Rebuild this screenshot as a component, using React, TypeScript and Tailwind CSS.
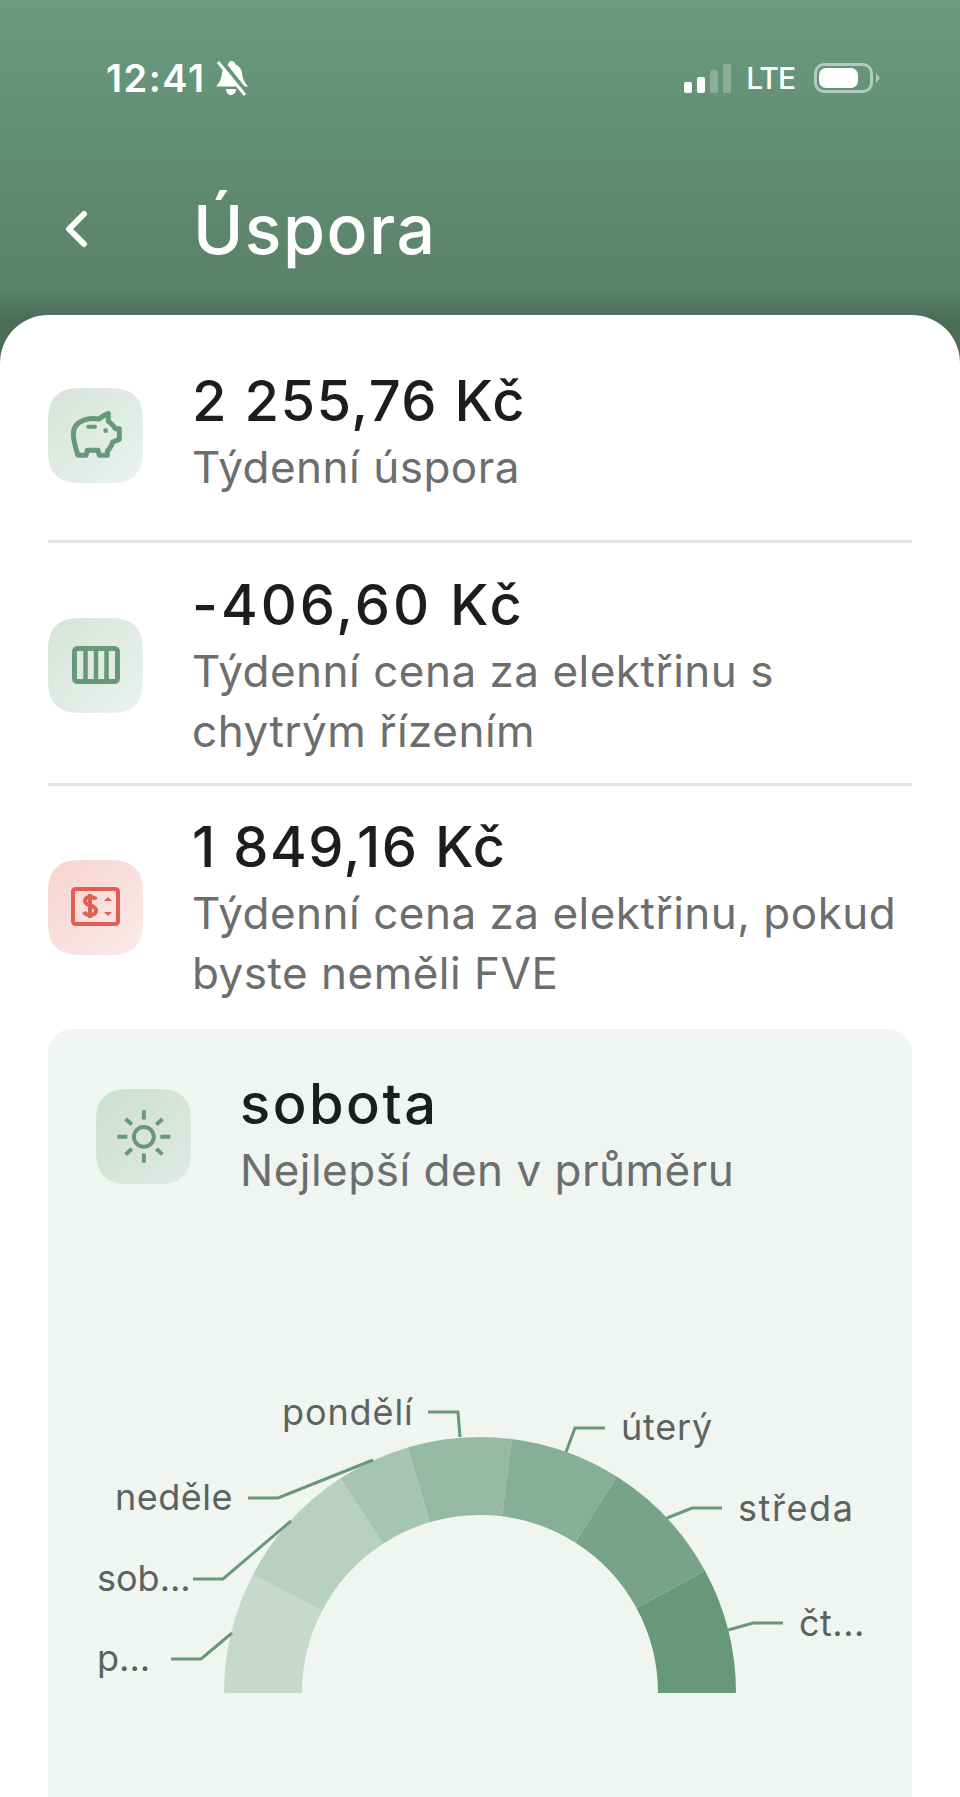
import React from 'react';

const polar = (r: number, deg: number) => {
  const a = (deg * Math.PI) / 180;
  return [480 - r * Math.cos(a), 1693 - r * Math.sin(a)];
};

const arcPath = (from: number, to: number) => {
  const [x1, y1] = polar(256, from);
  const [x2, y2] = polar(256, to);
  const [x3, y3] = polar(178, to);
  const [x4, y4] = polar(178, from);
  return `M${x1} ${y1}A256 256 0 0 1 ${x2} ${y2}L${x3} ${y3}A178 178 0 0 0 ${x4} ${y4}Z`;
};

const segments = [
  { from: 0, to: 27.5, className: 'fill-[#c5d9ce]' },
  { from: 27.5, to: 57, className: 'fill-[#b7d0c2]' },
  { from: 57, to: 73.6, className: 'fill-[#a6c4b3]' },
  { from: 73.6, to: 97.1, className: 'fill-[#95b9a5]' },
  { from: 97.1, to: 122.3, className: 'fill-[#86ae99]' },
  { from: 122.3, to: 151.5, className: 'fill-[#78a38a]' },
  { from: 151.5, to: 180, className: 'fill-[#679879]' },
];

const labels = [
  { text: 'pondělí', x: 282, y: 1425, line: '428,1412 458,1412 460,1437', className: 'tracking-[0.9px]' },
  { text: 'neděle', x: 115, y: 1510, line: '248,1498 278,1498 373,1460', className: 'tracking-[0.5px]' },
  { text: 'sob...', x: 97, y: 1591, line: '193,1579 223,1579 291,1521', className: 'tracking-[0px]' },
  { text: 'p...', x: 97, y: 1671, line: '171,1659 201,1659 232,1633', className: 'tracking-[0px]' },
  { text: 'úterý', x: 621, y: 1440, line: '605,1428 575,1428 566,1452', className: 'tracking-[0.8px]' },
  { text: 'středa', x: 738, y: 1521, line: '722,1508 692,1508 667,1518', className: 'tracking-[1.6px]' },
  { text: 'čt...', x: 799, y: 1636, line: '783,1623 753,1623 728,1630', className: 'tracking-[0.5px]' },
];

const PiggyIcon = () => (
  <svg width="52" height="50" viewBox="120 120 156 150" fill="none" stroke="#679879" strokeWidth="15" strokeLinecap="round" strokeLinejoin="round">
    <path d="M148 157C165 146 190 143 207 147C215 140 225 134 235 130L235 154C246 162 252 168 256 176L268 176L268 208L248 216C244 228 238 238 232 243L232 256L208 256L204 241L172 241L168 256L144 256C138 236 130 215 130 192C130 176 138 164 148 157Z" />
    <path d="M175 170L195 170" strokeWidth="12" />
    <circle cx="227" cy="182" r="7" fill="#679879" stroke="none" />
  </svg>
);

const MeterIcon = () => (
  <svg width="48" height="38" viewBox="0 0 48 38" fill="none" stroke="#679879">
    <rect x="2.500" y="2.500" width="43" height="33" rx="3" strokeWidth="5" />
    <path d="M13.500 2V36M24 2V36M34.500 2V36" strokeWidth="4.500" />
  </svg>
);

const CashIcon = () => (
  <svg width="50" height="40" viewBox="0 0 50 40" fill="none" stroke="#df5f52">
    <rect x="2" y="2" width="45" height="35" rx="2.500" strokeWidth="4" />
    <path d="M25 12.500C24 10.500 22 10 19 10C16 10 14 11.500 14 14C14 19.500 25 17.500 25 23.500C25 26.500 22.500 28 19 28C16 28 14 27 13 25M19 7V31" strokeWidth="4" />
    <path d="M33 14L37 10L41 14ZM33 25L37 29L41 25Z" fill="#df5f52" stroke="none" />
  </svg>
);

const SunIcon = () => (
  <svg width="58" height="58" viewBox="255 835 175 175" fill="none" stroke="#679879" strokeWidth="12">
    <circle cx="342" cy="922" r="30" />
    <path d="M342 842V870M342 972V1000M262 922H292M392 922H422M287 868L306 885M398 868L380 885M287 975L306 958M398 975L380 958" />
  </svg>
);

const BellOffIcon = () => (
  <svg width="34" height="35" viewBox="0 0 34 35" fill="white">
    <path d="M16 0C18.500 0 20 1.500 20.500 3.500C24.500 5 26.500 8.500 27 12C27.500 17 29 21 33 25.500L1 25.500C5 21 6.500 17 7 12C7.500 8.500 9.500 5 13 3.500C13.500 1.500 14.500 0 16 0Z" />
    <path d="M11 28H21C21 31.500 19 34 16 34C13 34 11 31.500 11 28Z" />
    <path d="M6 -1L33 33" stroke="#659679" strokeWidth="4" />
    <path d="M3 1L30 34" stroke="white" strokeWidth="3" />
  </svg>
);

const StatusBar = () => (
  <div className="flex h-[36px] items-center justify-between pl-[106px] pr-[80px]">
    <div className="flex items-center gap-[9px]">
      <span className="text-[38px] leading-none font-semibold tracking-[1.5px] text-white">12:41</span>
      <BellOffIcon />
    </div>
    <div className="flex items-center">
      <div className="flex h-[30px] items-end gap-[5px]">
        <div className="h-[11px] w-[8px] rounded-[2px] bg-white" />
        <div className="h-[16px] w-[8px] rounded-[2px] bg-white" />
        <div className="h-[23px] w-[8px] rounded-[2px] bg-white/25" />
        <div className="h-[29px] w-[8px] rounded-[2px] bg-white/25" />
      </div>
      <span className="ml-[15px] text-[30px] leading-none font-medium tracking-[-1px] text-white">LTE</span>
      <div className="ml-[19px] flex h-[30px] w-[59px] items-center rounded-[10px] border-[3px] border-white/50 pl-[2px]">
        <div className="h-[20px] w-[39px] rounded-[7px] bg-white" />
      </div>
      <div className="ml-[3px] h-0 w-0 border-y-[5px] border-l-[4px] border-y-transparent border-l-white/50" />
    </div>
  </div>
);

const Row = ({
  icon,
  tint,
  title,
  lines,
  titleClass = 'tracking-[1.5px]',
  iconClass = '',
}: {
  icon: React.ReactNode;
  tint: string;
  title: string;
  lines: string[];
  titleClass?: string;
  iconClass?: string;
}) => (
  <div className="flex items-center gap-[49px]">
    <div className={`flex h-[95px] w-[95px] shrink-0 items-center justify-center rounded-[36px] [corner-shape:superellipse(1.5)] ${tint} ${iconClass}`}>
      {icon}
    </div>
    <div>
      <div className={`text-[56px] leading-[72px] font-medium text-[#1a1f1c] ${titleClass}`}>{title}</div>
      {lines.map((line) => (
        <div key={line} className="text-[44px] leading-[60px] tracking-[0.5px] whitespace-nowrap text-[#6b6e6c]">
          {line}
        </div>
      ))}
    </div>
  </div>
);

const greenTint = 'bg-gradient-to-br from-[#d5e3da] to-[#ebf3ef]';
const redTint = 'bg-gradient-to-br from-[#f6d4d1] to-[#fbebe9]';

export default function App() {
  return (
    <div className="flex h-[1797px] w-[960px] flex-col overflow-hidden bg-[#4d6d59] font-['Inter',sans-serif]">
      <header className="h-[315px] shrink-0 bg-[linear-gradient(180deg,#6a9b7e_0%,#5a8169_92%,#4f705b_100%)] pt-[60px]">
        <StatusBar />
        <div className="mt-[88px] flex items-center pl-[64px]">
          <svg width="24" height="38" viewBox="0 0 24 38" fill="none" stroke="white" strokeWidth="6" strokeLinecap="round" strokeLinejoin="round">
            <path d="M20 4L5 19L20 34" />
          </svg>
          <h1 className="ml-[105px] text-[68px] leading-[90px] font-[450] tracking-[1.5px] text-white">Úspora</h1>
        </div>
      </header>
      <main className="flex flex-1 flex-col rounded-t-[48px] bg-white px-[48px]">
        <div className="pt-[50px] pb-[43px]">
          <Row icon={<PiggyIcon />} tint={greenTint} iconClass="mt-[8px]" title="2 255,76 Kč" lines={['Týdenní úspora']} />
        </div>
        <div className="border-t-[3px] border-[#e4e4e4] pt-[26px] pb-[22px]">
          <Row
            icon={<MeterIcon />}
            tint={greenTint}
            titleClass="tracking-[3px]"
            title="-406,60 Kč"
            lines={['Týdenní cena za elektřinu s', 'chytrým řízením']}
          />
        </div>
        <div className="border-t-[3px] border-[#e4e4e4] pt-[25px] pb-[26px]">
          <Row
            icon={<CashIcon />}
            tint={redTint}
            title="1 849,16 Kč"
            lines={['Týdenní cena za elektřinu, pokud', 'byste neměli FVE']}
          />
        </div>
        <section className="flex-1 rounded-t-[24px] bg-[#f0f5f1] pt-[39px]">
          <div className="pl-[48px]">
            <Row
              icon={<SunIcon />}
              tint="bg-gradient-to-br from-[#cddfd4] to-[#dfeae4]"
              iconClass="mt-[5px]"
              titleClass="tracking-[2.5px]"
              title="sobota"
              lines={['Nejlepší den v průměru']}
            />
          </div>
          <svg className="mt-[140px] block" width="864" height="400" viewBox="48 1340 864 400">
            {segments.map((s) => (
              <path key={s.from} d={arcPath(s.from, s.to)} className={s.className} />
            ))}
            {labels.map((l) => (
              <g key={l.text}>
                <polyline points={l.line} fill="none" stroke="#679879" strokeWidth="3" />
                <text x={l.x} y={l.y} className={`fill-[#5c625e] text-[36px] ${l.className}`}>
                  {l.text}
                </text>
              </g>
            ))}
          </svg>
        </section>
      </main>
    </div>
  );
}
